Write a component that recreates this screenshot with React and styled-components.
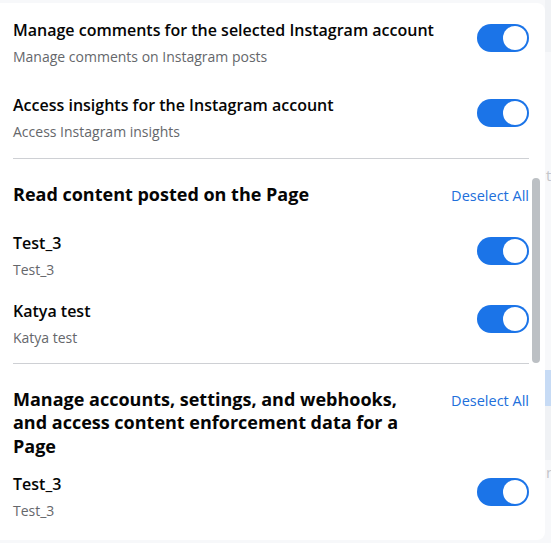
import React from 'react';
import styled, { createGlobalStyle } from 'styled-components';

const GlobalStyle = createGlobalStyle`
  html, body {
    margin: 0;
    padding: 0;
    background: #f7f8fa;
  }
  * { box-sizing: border-box; }
`;

const Page = styled.div`
  width: 551px;
  height: 543px;
  display: flex;
  overflow: hidden;
  background: #f7f8fa;
  font-family: "Open Sans", "Noto Sans", sans-serif;
`;

const Card = styled.div`
  position: relative;
  flex: none;
  width: 545px;
  height: 537px;
  margin-top: 3px;
  background: #fff;
  border-radius: 0 8px 8px 0;
  overflow: hidden;
`;

const Scroll = styled.div`
  height: 100%;
  padding: 17px 16px 0 13px;
`;

const Row = styled.div`
  display: flex;
  justify-content: space-between;
  align-items: flex-start;
  margin-top: ${({ $gap }) => $gap || 0}px;
`;

const TextCol = styled.div`
  display: flex;
  flex-direction: column;
  gap: 7px;
`;

const Title = styled.div`
  font-size: 16px;
  line-height: 20px;
  font-weight: 600;
  color: #050505;
`;

const Sub = styled.div`
  font-size: 14px;
  line-height: 20px;
  color: #65676b;
`;

const Toggle = styled.div`
  flex: none;
  width: 52px;
  height: 28px;
  margin-top: 4px;
  border-radius: 14px;
  background: #1b74e8;
  display: flex;
  justify-content: flex-end;
  align-items: center;
  padding: 2px;
`;

const Knob = styled.div`
  width: 24px;
  height: 24px;
  border-radius: 50%;
  background: #fff;
`;

const Divider = styled.div`
  height: 1px;
  background: #ced0d4;
  margin-top: ${({ $gap }) => $gap}px;
`;

const SectionHead = styled.div`
  display: flex;
  justify-content: space-between;
  align-items: flex-start;
  gap: 30px;
  margin-top: 24px;
`;

const Heading = styled.div`
  font-size: 18px;
  line-height: 23.5px;
  font-weight: 700;
  color: #050505;
  max-width: 410px;
`;

const LinkText = styled.div`
  flex: none;
  font-size: 14.5px;
  line-height: 20px;
  color: #216fdb;
  margin-top: 3px;
`;

const ScrollThumb = styled.div`
  position: absolute;
  right: 5px;
  top: 175px;
  width: 8px;
  height: 185px;
  border-radius: 4px;
  background: #bcc0c4;
`;

const Side = styled.div`
  flex: 1;
  min-width: 0;
  display: flex;
  flex-direction: column;
  color: #c4c6ca;
  font-family: "Open Sans", sans-serif;
  font-size: 15px;
`;

const SideBlock = styled.div`
  height: ${({ $h }) => $h}px;
  background: ${({ $bg }) => $bg || 'transparent'};
  line-height: ${({ $h }) => $h}px;
  overflow: hidden;
  padding-left: 1px;
`;

const Item = ({ title, sub, gap }) => (
  <Row $gap={gap}>
    <TextCol>
      <Title>{title}</Title>
      <Sub>{sub}</Sub>
    </TextCol>
    <Toggle><Knob /></Toggle>
  </Row>
);

const App = () => (
  <>
    <GlobalStyle />
    <Page>
      <Card>
        <Scroll>
          <Item title="Manage comments for the selected Instagram account" sub="Manage comments on Instagram posts" />
          <Item gap={28} title="Access insights for the Instagram account" sub="Access Instagram insights" />
          <Divider $gap={16} />
          <SectionHead>
            <Heading>Read content posted on the Page</Heading>
            <LinkText>Deselect All</LinkText>
          </SectionHead>
          <Item gap={26} title="Test_3" sub="Test_3" />
          <Item gap={21} title="Katya test" sub="Katya test" />
          <Divider $gap={15} />
          <SectionHead>
            <Heading>Manage accounts, settings, and webhooks, and access content enforcement data for a Page</Heading>
            <LinkText>Deselect All</LinkText>
          </SectionHead>
          <Item gap={16} title="Test_3" sub="Test_3" />
        </Scroll>
        <ScrollThumb />
      </Card>
      <Side>
        <SideBlock $h={52} $bg="#f0f2f5" />
        <SideBlock $h={112} />
        <SideBlock $h={22}>t</SideBlock>
        <SideBlock $h={184} />
        <SideBlock $h={36} $bg="#c7dbf5" />
        <SideBlock $h={54} $bg="#f0f2f5" />
        <SideBlock $h={24}>n</SideBlock>
      </Side>
    </Page>
  </>
);

export default App;
